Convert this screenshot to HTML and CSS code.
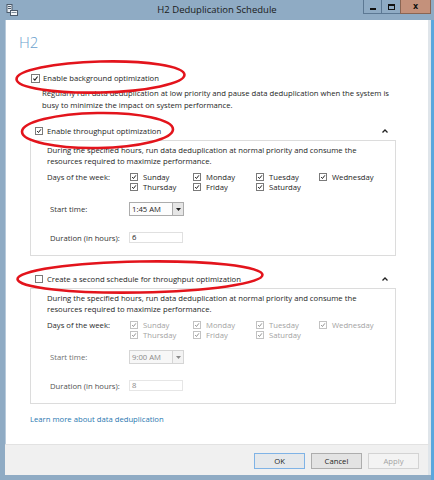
FILE: index.html
```html
<!DOCTYPE html>
<html>
<head>
<meta charset="utf-8">
<link rel="stylesheet" href="styles.css">
</head>
<body>
<div class="window">
  <div class="titlebar">
    <svg class="app-icon" width="12" height="12" viewBox="0 0 12 12">
      <rect x="1" y="0.5" width="5" height="8" fill="#e9eef3" stroke="#4d5b6b"/>
      <line x1="2" y1="2.5" x2="5" y2="2.5" stroke="#4d5b6b"/>
      <line x1="2" y1="4.5" x2="5" y2="4.5" stroke="#4d5b6b"/>
      <rect x="4.5" y="6.5" width="7" height="5" fill="#f4f6f8" stroke="#4d5b6b"/>
      <line x1="5.5" y1="8.5" x2="10.5" y2="8.5" stroke="#7d8a98"/>
    </svg>
    <div class="title">H2 Deduplication Schedule</div>
    <div class="controls">
      <div class="ctl ctl-min"><span class="min-glyph"></span></div>
      <div class="ctl ctl-max"><span class="max-glyph"></span></div>
      <div class="ctl ctl-close">x</div>
    </div>
  </div>
  <div class="frame-body">
    <div class="client">
      <div class="heading">H2</div>
      <div class="content">
        <div class="bg-row">
          <span class="cb cb-big"><svg viewBox="0 0 9 9"><path d="M1.8 4.6 L3.7 6.6 L7.2 2" /></svg></span>
          <span>Enable background optimization</span>
        </div>
        <p class="bg-desc">Regularly run data deduplication at low priority and pause data deduplication when the system is busy to minimize the impact on system performance.</p>

        <div class="group-head">
          <span class="cb"><svg viewBox="0 0 8 8"><path d="M1.5 4.1 L3.3 6 L6.5 1.8" /></svg></span>
          <span class="head-label">Enable throughput optimization</span>
          <svg class="caret" width="6" height="4" viewBox="0 0 6 4"><path d="M0.5 3.5 L3 1 L5.5 3.5"/></svg>
        </div>
        <div class="box">
          <p class="box-desc">During the specified hours, run data deduplication at normal priority and consume the resources required to maximize performance.</p>
          <div class="days">
            <span class="days-label">Days of the week:</span>
            <span class="day"><span class="cb"><svg viewBox="0 0 8 8"><path d="M1.5 4.1 L3.3 6 L6.5 1.8" /></svg></span>Sunday</span>
            <span class="day"><span class="cb"><svg viewBox="0 0 8 8"><path d="M1.5 4.1 L3.3 6 L6.5 1.8" /></svg></span>Monday</span>
            <span class="day"><span class="cb"><svg viewBox="0 0 8 8"><path d="M1.5 4.1 L3.3 6 L6.5 1.8" /></svg></span>Tuesday</span>
            <span class="day"><span class="cb"><svg viewBox="0 0 8 8"><path d="M1.5 4.1 L3.3 6 L6.5 1.8" /></svg></span>Wednesday</span>
            <span></span>
            <span class="day"><span class="cb"><svg viewBox="0 0 8 8"><path d="M1.5 4.1 L3.3 6 L6.5 1.8" /></svg></span>Thursday</span>
            <span class="day"><span class="cb"><svg viewBox="0 0 8 8"><path d="M1.5 4.1 L3.3 6 L6.5 1.8" /></svg></span>Friday</span>
            <span class="day"><span class="cb"><svg viewBox="0 0 8 8"><path d="M1.5 4.1 L3.3 6 L6.5 1.8" /></svg></span>Saturday</span>
          </div>
          <div class="field-row start-row">
            <span class="field-label">Start time:</span>
            <div class="select">
              <span class="select-value">1:45 AM</span>
              <span class="select-btn"><svg width="5" height="3" viewBox="0 0 5 3"><path d="M0 0 H5 L2.5 3 Z"/></svg></span>
            </div>
          </div>
          <div class="field-row dur-row">
            <span class="field-label">Duration (in hours):</span>
            <div class="input">6</div>
          </div>
        </div>

        <div class="group-head second-head">
          <span class="cb"></span>
          <span class="head-label">Create a second schedule for throughput optimization</span>
          <svg class="caret" width="6" height="4" viewBox="0 0 6 4"><path d="M0.5 3.5 L3 1 L5.5 3.5"/></svg>
        </div>
        <div class="box disabled">
          <p class="box-desc">During the specified hours, run data deduplication at normal priority and consume the resources required to maximize performance.</p>
          <div class="days">
            <span class="days-label">Days of the week:</span>
            <span class="day"><span class="cb"><svg viewBox="0 0 8 8"><path d="M1.5 4.1 L3.3 6 L6.5 1.8" /></svg></span>Sunday</span>
            <span class="day"><span class="cb"><svg viewBox="0 0 8 8"><path d="M1.5 4.1 L3.3 6 L6.5 1.8" /></svg></span>Monday</span>
            <span class="day"><span class="cb"><svg viewBox="0 0 8 8"><path d="M1.5 4.1 L3.3 6 L6.5 1.8" /></svg></span>Tuesday</span>
            <span class="day"><span class="cb"><svg viewBox="0 0 8 8"><path d="M1.5 4.1 L3.3 6 L6.5 1.8" /></svg></span>Wednesday</span>
            <span></span>
            <span class="day"><span class="cb"><svg viewBox="0 0 8 8"><path d="M1.5 4.1 L3.3 6 L6.5 1.8" /></svg></span>Thursday</span>
            <span class="day"><span class="cb"><svg viewBox="0 0 8 8"><path d="M1.5 4.1 L3.3 6 L6.5 1.8" /></svg></span>Friday</span>
            <span class="day"><span class="cb"><svg viewBox="0 0 8 8"><path d="M1.5 4.1 L3.3 6 L6.5 1.8" /></svg></span>Saturday</span>
          </div>
          <div class="field-row start-row">
            <span class="field-label start-label">Start time:</span>
            <div class="select">
              <span class="select-value">9:00 AM</span>
              <span class="select-btn"><svg width="5" height="3" viewBox="0 0 5 3"><path d="M0 0 H5 L2.5 3 Z"/></svg></span>
            </div>
          </div>
          <div class="field-row dur-row">
            <span class="field-label dur-label">Duration (in hours):</span>
            <div class="input">8</div>
          </div>
        </div>

        <a class="learn" href="#">Learn more about data deduplication</a>
      </div>
    </div>
    <div class="footer">
      <button class="btn btn-default">OK</button>
      <button class="btn">Cancel</button>
      <button class="btn btn-disabled">Apply</button>
    </div>
  </div>
  <svg class="marks" width="434" height="480" viewBox="0 0 434 480">
    <ellipse cx="100.5" cy="77" rx="84" ry="15.5" transform="rotate(-1.5 100.5 77)"/>
    <ellipse cx="97.5" cy="130.5" rx="75.5" ry="17.5" transform="rotate(-1 97.5 130.5)"/>
    <ellipse cx="140" cy="277" rx="122.5" ry="15.5" transform="rotate(-1 140 277)"/>
  </svg>
</div>
</body>
</html>
```
FILE: styles.css
```css
* { box-sizing: border-box; }
html, body { margin: 0; padding: 0; }
body {
  font-family: "Open Sans", "Noto Sans", sans-serif;
  font-size: 7.7px;
  color: #1e1e1e;
  background: #8fabc4;
}
.window {
  position: relative;
  width: 434px;
  height: 480px;
  display: flex;
  flex-direction: column;
  background: #8fabc4;
  overflow: hidden;
}
.titlebar {
  height: 20px;
  flex: none;
  display: grid;
  grid-template-columns: 1fr auto 1fr;
  align-items: start;
}
.app-icon { margin: 4px 0 0 6px; }
.title {
  font-size: 9.5px;
  line-height: 20px;
  color: #1a1a1a;
  white-space: nowrap;
}
.controls {
  justify-self: end;
  display: flex;
  margin-right: 3px;
}
.ctl {
  height: 14px;
  display: flex;
  align-items: center;
  justify-content: center;
  border: 1px solid #5c7893;
  border-top: none;
  background: #8fabc4;
}
.ctl-min { width: 18px; border-right: none; }
.ctl-max { width: 19px; border-right: none; }
.ctl-close {
  width: 31px;
  background: #c4917b;
  border-color: #8a6553;
  font-family: "DejaVu Sans", sans-serif;
  font-weight: bold;
  font-size: 8px;
  line-height: 1;
  color: #111;
}
.min-glyph { width: 6px; height: 2px; background: #111; margin-top: 5px; }
.max-glyph { width: 7px; height: 6px; border: 1px solid #111; border-top-width: 2px; }

.frame-body {
  flex: 1;
  display: flex;
  flex-direction: column;
  padding: 0 0 5px 5px;
  border-right: 3px solid #5aa7de;
}
.client {
  flex: 1;
  background: #fff;
  border-right: 3px solid #dfe5ea;
  border-left: 1px solid #b8cadb;
  overflow: hidden;
}
.heading {
  font-size: 15px;
  font-weight: 300;
  color: #6a9fcd;
  line-height: 18px;
  margin: 13px 0 0 13px;
}
.content {
  margin-left: 24px;
  width: 366px;
}
.bg-row {
  margin-top: 20px;
  height: 14px;
  display: flex;
  align-items: center;
  gap: 3px;
  padding-left: 1px;
}
.cb {
  width: 8px;
  height: 8px;
  flex: none;
  border: 1px solid #7a7a7a;
  background: #fff;
  display: inline-flex;
}
.cb-big { width: 9px; height: 9px; }
.cb svg { width: 100%; height: 100%; display: block; }
.cb path { fill: none; stroke: #1a1a1a; stroke-width: 1.3; }
.bg-desc {
  margin: 3px 0 0;
  padding-left: 12px;
  line-height: 11.5px;
}
.group-head {
  margin-top: 13px;
  height: 14px;
  display: flex;
  align-items: center;
  gap: 4px;
  padding: 0 8px 0 5px;
}
.second-head { margin-top: 16px; }
.head-label { flex: 1; }
.caret path { fill: none; stroke: #222; stroke-width: 1.3; }
.box {
  margin-top: 2px;
  border: 1px solid #dcdcdc;
  padding: 4px 0 12px 16px;
}
.box-desc {
  margin: 0;
  line-height: 11px;
  padding-right: 20px;
}
.days {
  margin-top: 5px;
  display: grid;
  grid-template-columns: 83px repeat(4, 63px);
  grid-auto-rows: 10px;
  line-height: 10px;
}
.days-label { color: #2a2a2a; }
.day {
  display: flex;
  align-items: center;
  gap: 5px;
}
.field-row {
  display: flex;
  align-items: center;
  padding-left: 3px;
}
.field-label { width: 79px; color: #333; }
.start-row { margin-top: 10px; }
.dur-row { margin-top: 16px; }
.select {
  width: 55px;
  height: 14px;
  border: 1px solid #acacac;
  display: flex;
  background: #fdfdfd;
}
.select-value { flex: 1; padding-left: 2px; line-height: 12px; }
.select-btn {
  width: 11px;
  border-left: 1px solid #acacac;
  background: #e6e6e6;
  display: flex;
  align-items: center;
  justify-content: center;
}
.select-btn path { fill: #222; }
.input {
  width: 54px;
  height: 11px;
  border: 1px solid #e0e0e0;
  padding-left: 2px;
  line-height: 9px;
}
.disabled .day { color: #a3a3a3; }
.disabled .cb { border-color: #c2c2c2; }
.disabled .cb path { stroke: #8f8f8f; }
.disabled .start-label { color: #707070; }
.disabled .dur-label { color: #505050; }
.disabled .select { border-color: #d5d5d5; background: #f7f7f7; }
.disabled .select-value { color: #8a8a8a; }
.disabled .select-btn { border-left-color: #d5d5d5; background: #f3f3f3; }
.disabled .select-btn path { fill: #8a8a8a; }
.disabled .input { color: #8a8a8a; border-color: #e6e6e6; }
.learn {
  display: block;
  margin-top: 10px;
  line-height: 11px;
  color: #2a78b0;
  text-decoration: none;
}
.footer {
  flex: none;
  height: 31px;
  background: #f0f0f0;
  border-top: 1px solid #e2e2e2;
  border-right: 3px solid #dfe5ea;
  display: flex;
  justify-content: flex-end;
  align-items: flex-start;
  gap: 6px;
  padding: 8px 9px 0 0;
}
.btn {
  width: 51px;
  height: 16px;
  padding: 0;
  font-family: "Open Sans", "Noto Sans", sans-serif;
  font-size: 7.7px;
  color: #1e1e1e;
  background: #e3e3e3;
  border: 1px solid #adadad;
}
.btn-default { border-color: #7fb3e6; background: #e5e8eb; }
.btn-disabled { color: #a3a3a3; background: #f3f3f3; border-color: #d3d3d3; }
.marks {
  position: absolute;
  left: 0;
  top: 0;
  pointer-events: none;
}
.marks ellipse { fill: none; stroke: #e3141c; stroke-width: 2.6; }
```
